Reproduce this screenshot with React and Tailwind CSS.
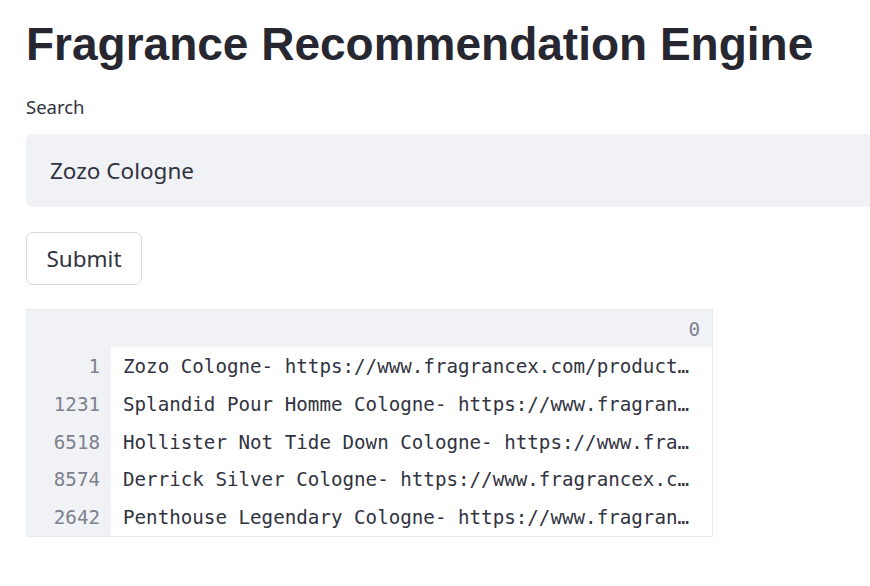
const rows = [
  { idx: '1', text: 'Zozo Cologne- https://www.fragrancex.com/product…' },
  { idx: '1231', text: 'Splandid Pour Homme Cologne- https://www.fragran…' },
  { idx: '6518', text: 'Hollister Not Tide Down Cologne- https://www.fra…' },
  { idx: '8574', text: 'Derrick Silver Cologne- https://www.fragrancex.c…' },
  { idx: '2642', text: 'Penthouse Legendary Cologne- https://www.fragran…' },
];

function ResultsTable() {
  return (
    <div className="w-[687px] border border-[#e6e9ef] font-['DejaVu_Sans_Mono',monospace] text-[19.2px] text-[#31333f]">
      <div className="flex h-[37px] bg-[#f0f2f6]">
        <div className="w-[84px]" />
        <div className="flex-1 flex items-center justify-end pr-[12px] pt-[3px] text-[#7d808d]">0</div>
      </div>
      {rows.map((row) => (
        <div key={row.idx} className="flex h-[37.8px]">
          <div className="w-[84px] bg-[#f0f2f6] flex items-center justify-end pr-[11px] pt-[3px] text-[#7d808d]">
            {row.idx}
          </div>
          <div className="flex-1 min-w-0 flex items-center pl-[12px] pt-[3px] bg-white whitespace-nowrap">
            {row.text}
          </div>
        </div>
      ))}
    </div>
  );
}

export default function App() {
  return (
    <div className="min-h-[586px] bg-white pl-[26px] pt-[14px] overflow-hidden font-['Noto_Sans',sans-serif] text-[#31333f]">
      <h1 className="text-[46px] leading-[60px] font-bold text-[#262730] font-['Liberation_Sans',sans-serif]">
        Fragrance Recommendation Engine
      </h1>
      <label className="block mt-[20px] text-[18.5px] leading-[26px]">Search</label>
      <div className="mt-[14px] h-[73px] w-[870px] rounded-[7px] bg-[#f0f2f6] flex items-center pl-[24px] text-[22.5px]">
        Zozo Cologne
      </div>
      <button className="mt-[25px] h-[53px] w-[116px] rounded-[7px] border border-[#d5d7dd] bg-white text-[22.5px] flex items-center justify-center">
        Submit
      </button>
      <div className="mt-[24px]">
        <ResultsTable />
      </div>
    </div>
  );
}
